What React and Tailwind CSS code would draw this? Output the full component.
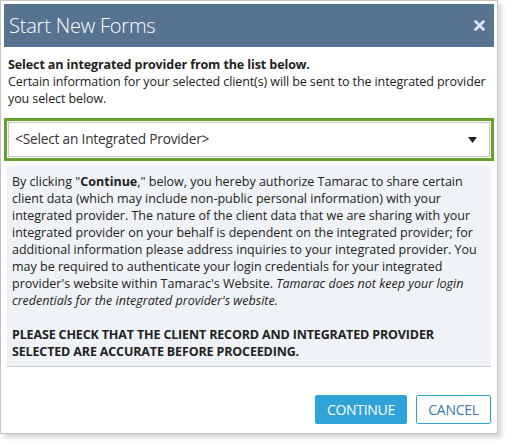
import React from 'react'

export default function App() {
  return (
    <div className="w-[508px] h-[443px] bg-white" style={{ fontFamily: '"Open Sans", "Noto Sans", sans-serif' }}>
      <div className="w-[498px] h-[434px] border border-[#c4c4c4] bg-white p-[3px] flex flex-col shadow-[4px_4px_4px_rgba(0,0,0,0.15)]">
        {/* Header */}
        <div className="h-[43px] bg-[#56738f] flex items-center justify-between pl-[5px] pr-[8px]">
          <span className="text-white text-[20px] font-light tracking-[-0.2px]">Start New Forms</span>
          <svg width="11" height="11" viewBox="0 0 11 11" className="mr-[1px]">
            <path d="M1.5 1.5 L9.5 9.5 M9.5 1.5 L1.5 9.5" stroke="#dfe5ec" strokeWidth="2.6" strokeLinecap="round" />
          </svg>
        </div>

        {/* Intro */}
        <div className="px-[4px] pt-[9px] text-[12.5px] leading-[17px] text-[#222] tracking-[-0.1px]">
          <p className="font-bold">Select an integrated provider from the list below.</p>
          <p>Certain information for your selected client(s) will be sent to the integrated provider you select below.</p>
        </div>

        {/* Select */}
        <div className="mt-[11px] border-[3px] border-[#64a22e] p-px">
          <div className="h-[35px] border border-[#c8c8c8] flex items-center justify-between pl-[6px] pr-[12px]">
            <span className="text-[13.7px] text-[#333] tracking-[-0.2px]">&lt;Select an Integrated Provider&gt;</span>
            <svg width="9" height="6" viewBox="0 0 9 6">
              <path d="M0 0 L9 0 L4.5 6 Z" fill="#222" />
            </svg>
          </div>
        </div>

        {/* Disclaimer */}
        <div className="mx-[3px] mt-[5px] bg-[#eff3f7] border-b border-[#c8c8c8] px-[5px] pt-[7px] pb-[6px] text-[12.5px] leading-[17px] text-[#222] tracking-[0px]">
          <p>
            By clicking "<b>Continue</b>," below, you hereby authorize Tamarac to share certain client data (which may include non-public personal information) with your integrated provider. The nature of the client data that we are sharing with your integrated provider on your behalf is dependent on the integrated provider; for additional information please address inquiries to your integrated provider. You may be required to authenticate your login credentials for your integrated provider's website within Tamarac's Website. <i>Tamarac does not keep your login credentials for the integrated provider's website.</i>
          </p>
          <p className="font-bold mt-[17px] tracking-[-0.15px]">PLEASE CHECK THAT THE CLIENT RECORD AND INTEGRATED PROVIDER SELECTED ARE ACCURATE BEFORE PROCEEDING.</p>
        </div>

        {/* Buttons */}
        <div className="flex-1 flex items-end justify-end gap-[9px] pr-[3px] pb-[6px]">
          <button className="h-[29px] w-[92px] bg-[#2fa3d8] rounded-[2px] text-white text-[14px] tracking-[-0.3px]">CONTINUE</button>
          <button className="h-[29px] w-[75px] border border-[#2fa3d8] rounded-[2px] text-[#3a79b0] text-[14px] tracking-[-0.3px] bg-white">CANCEL</button>
        </div>
      </div>
    </div>
  )
}
